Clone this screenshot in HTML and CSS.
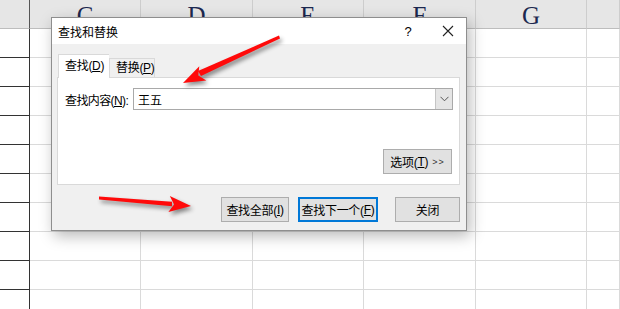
FILE: index.html
```html
<!DOCTYPE html>
<html lang="zh-CN">
<head>
<meta charset="utf-8">
<title>查找和替换</title>
<link rel="stylesheet" href="styles.css">
</head>
<body>
<div class="sheet">
  <div class="cell hdr corner"></div>
  <div class="cell hdr col">C</div>
  <div class="cell hdr col">D</div>
  <div class="cell hdr col">E</div>
  <div class="cell hdr col">F</div>
  <div class="cell hdr col">G</div>
  <div class="cell hdr col"></div>

  <div class="cell left"></div><div class="cell"></div><div class="cell"></div><div class="cell"></div><div class="cell"></div><div class="cell"></div><div class="cell"></div>
  <div class="cell left"></div><div class="cell"></div><div class="cell"></div><div class="cell"></div><div class="cell"></div><div class="cell"></div><div class="cell"></div>
  <div class="cell left"></div><div class="cell"></div><div class="cell"></div><div class="cell"></div><div class="cell"></div><div class="cell"></div><div class="cell"></div>
  <div class="cell left"></div><div class="cell"></div><div class="cell"></div><div class="cell"></div><div class="cell"></div><div class="cell"></div><div class="cell"></div>
  <div class="cell left"></div><div class="cell"></div><div class="cell"></div><div class="cell"></div><div class="cell"></div><div class="cell"></div><div class="cell"></div>
  <div class="cell left"></div><div class="cell"></div><div class="cell"></div><div class="cell"></div><div class="cell"></div><div class="cell"></div><div class="cell"></div>
  <div class="cell left"></div><div class="cell"></div><div class="cell"></div><div class="cell"></div><div class="cell"></div><div class="cell"></div><div class="cell"></div>
  <div class="cell left"></div><div class="cell"></div><div class="cell"></div><div class="cell"></div><div class="cell"></div><div class="cell"></div><div class="cell"></div>
  <div class="cell left"></div><div class="cell"></div><div class="cell"></div><div class="cell"></div><div class="cell"></div><div class="cell"></div><div class="cell"></div>
  <div class="cell left"></div><div class="cell"></div><div class="cell"></div><div class="cell"></div><div class="cell"></div><div class="cell"></div><div class="cell"></div>
</div>

<div class="dialog">
  <div class="titlebar">
    <span class="title">查找和替换</span>
    <span class="help">?</span>
    <span class="close">
      <svg width="12" height="12" viewBox="0 0 12 12"><path d="M1 1 L11 11 M11 1 L1 11" stroke="#222" stroke-width="1.1" fill="none"/></svg>
    </span>
  </div>
  <div class="body">
    <div class="tabs">
      <div class="tab active">查找(<u>D</u>)</div>
      <div class="tab">替换(<u>P</u>)</div>
    </div>
    <div class="panel">
      <div class="findrow">
        <span class="label">查找内容(<u>N</u>):</span>
        <div class="combo">
          <span class="value">王五</span>
          <span class="drop">
            <svg width="9" height="6" viewBox="0 0 9 6"><path d="M0.5 0.8 L4.5 4.8 L8.5 0.8" stroke="#555" stroke-width="1" fill="none"/></svg>
          </span>
        </div>
      </div>
      <div class="optrow">
        <button class="btn opts">选项(<u>T</u>) <span class="gg">&gt;&gt;</span></button>
      </div>
    </div>
    <div class="actions">
      <button class="btn all">查找全部(<u>I</u>)</button>
      <button class="btn next">查找下一个(<u>F</u>)</button>
      <button class="btn closebtn">关闭</button>
    </div>
  </div>
</div>

<svg class="arrows" width="620" height="309" viewBox="0 0 620 309">
  <g class="arrow">
    <polygon points="279,35.5 280,38.5 201,76 198,71"/>
    <polygon points="183,83 206.3,80.6 198.3,75.6 199.3,66.2"/>
  </g>
  <g class="arrow">
    <polygon points="99,196.5 99,199.5 172,206.2 172,201.8"/>
    <polygon points="191,206 168.4,212.1 174.1,204.5 169.8,196.1"/>
  </g>
</svg>
</body>
</html>
```

FILE: styles.css
```css
* { box-sizing: border-box; }
html, body { margin: 0; padding: 0; }
body {
  width: 620px;
  height: 309px;
  overflow: hidden;
  background: #fff;
  font-family: "Liberation Sans", "Noto Sans CJK SC", sans-serif;
  position: relative;
}

.sheet {
  display: grid;
  grid-template-columns: 30px 111px 112px 111px 112px 111px 1fr;
  grid-template-rows: 29px repeat(10, 29px);
}
.cell {
  border-right: 1px solid #dadada;
  border-bottom: 1px solid #dadada;
  background: #fff;
}
.hdr {
  background: #e6e6e6;
  border-right: 1px solid #cdcdcd;
  border-bottom: 1px solid #bdbdbd;
  font-family: "Liberation Serif", "DejaVu Serif", serif;
  font-size: 25px;
  color: #1c2850;
  display: flex;
  justify-content: center;
  align-items: center;
  line-height: 1;
  padding-top: 3px;
}
.corner { border-right: 1px solid #555; }
.left {
  border-right: 1px solid #333;
  border-bottom: 1px solid #333;
}

.dialog {
  position: absolute;
  left: 51px;
  top: 17px;
  width: 416px;
  height: 214px;
  background: #f0f0f0;
  border: 1px solid #8e8e8e;
  box-shadow: 3px 5px 14px rgba(0, 0, 0, 0.28);
  display: flex;
  flex-direction: column;
  font-size: 12px;
  color: #000;
  white-space: nowrap;
}
.titlebar {
  height: 26px;
  background: #fff;
  display: flex;
  align-items: center;
  padding-left: 6px;
}
.title { flex: 1; font-size: 12px; }
.help {
  font-size: 13px;
  width: 20px;
  text-align: center;
  margin-right: 20px;
}
.close {
  width: 20px;
  display: flex;
  justify-content: center;
  margin-right: 8px;
}
.close svg { display: block; }

.body {
  flex: 1;
  padding: 10px 6px 0 5px;
  display: flex;
  flex-direction: column;
}
.tabs {
  display: flex;
  align-items: flex-end;
  height: 23px;
  margin-left: 1px;
  position: relative;
  z-index: 1;
}
.tab {
  height: 19px;
  padding: 0 0 0 6px;
  border: 1px solid #d9d9d9;
  border-bottom: none;
  background: #f0f0f0;
  line-height: 18px;
  font-size: 12px;
  width: 46px;
  letter-spacing: -0.3px;
}
.tab.active {
  height: 24px;
  width: 51px;
  background: #fff;
  line-height: 22px;
  padding: 0 0 0 6px;
  margin-bottom: -1px;
  border-right: none;
}
.panel {
  height: 108px;
  background: #fff;
  border: 1px solid #d9d9d9;
  display: flex;
  flex-direction: column;
  justify-content: space-between;
  padding: 10px 6px 10px 6px;
}
.findrow {
  display: flex;
  align-items: center;
}
.label { width: 69px; padding-left: 1px; letter-spacing: -0.6px; }
.combo {
  flex: 1;
  height: 22px;
  border: 1px solid #a9a9a9;
  display: flex;
  align-items: center;
  padding-left: 4px;
}
.value { flex: 1; }
.drop {
  width: 17px;
  height: 20px;
  background: #e5e5e5;
  border-left: 1px solid #c5c5c5;
  display: flex;
  align-items: center;
  justify-content: center;
}
.drop svg { display: block; }
.optrow { display: flex; justify-content: flex-end; padding-right: 1px; }

.btn {
  font-family: "Liberation Sans", "Noto Sans CJK SC", sans-serif;
  font-size: 12px;
  color: #000;
  background: #e1e1e1;
  border: 1px solid #adadad;
  padding: 0;
  height: 25px;
  display: flex;
  align-items: center;
  justify-content: center;
  white-space: nowrap;
  letter-spacing: -0.3px;
}
.opts { width: 69px; }
.gg { font-size: 9px; letter-spacing: 1px; margin-left: 4px; color: #333; }
.actions {
  display: flex;
  justify-content: flex-end;
  margin-top: 12px;
}
.all { width: 68px; }
.next {
  width: 80px;
  margin-left: 9px;
  border: 2px solid #0078d7;
}
.closebtn { width: 65px; margin-left: 17px; }

.arrows {
  position: absolute;
  left: 0;
  top: 0;
  pointer-events: none;
}
.arrow {
  fill: #ff0a0a;
  filter: drop-shadow(2px 3px 2px rgba(0, 0, 0, 0.45));
}
```
